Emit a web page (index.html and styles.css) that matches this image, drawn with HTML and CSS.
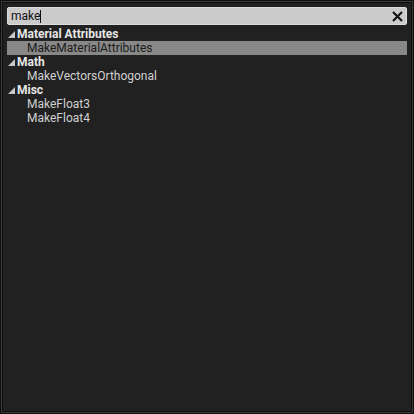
FILE: index.html
```html
<!DOCTYPE html>
<html>
<head>
<meta charset="utf-8">
<link rel="stylesheet" href="styles.css">
</head>
<body>
<div class="frame">
  <div class="inner">
    <div class="search">
      <span class="query">make</span><span class="caret"></span>
      <svg class="clear" width="11" height="11" viewBox="0 0 11 11"><path d="M1 1 L10 10 M10 1 L1 10" stroke="#111" stroke-width="2.1" fill="none"/></svg>
    </div>
    <div class="list">
      <div class="row cat"><span class="tri"></span>Material Attributes</div>
      <div class="row item sel">MakeMaterialAttributes</div>
      <div class="row cat"><span class="tri"></span>Math</div>
      <div class="row item">MakeVectorsOrthogonal</div>
      <div class="row cat"><span class="tri"></span>Misc</div>
      <div class="row item">MakeFloat3</div>
      <div class="row item">MakeFloat4</div>
    </div>
  </div>
</div>
</body>
</html>
```
FILE: styles.css
```css
html, body { margin: 0; padding: 0; background: #0e0e0e; }
body { width: 414px; height: 414px; font-family: Roboto, "Noto Sans", sans-serif; }
.frame {
  box-sizing: border-box;
  width: 414px; height: 414px;
  border: 1px solid #0e0e0e;
  background: #3a3a3a;
  padding: 1px;
}
.inner {
  box-sizing: border-box;
  height: 100%;
  border: 1px solid #0e0e0e;
  background: #212121;
  padding: 4px 4px;
}
.search {
  box-sizing: border-box;
  height: 18px;
  background: #cbcbcb;
  border: 1px solid #dcdcdc;
  border-radius: 2px;
  display: flex;
  align-items: center;
  padding-left: 3px;
  padding-right: 3px;
  color: #111;
  font-size: 12px;
}
.query { line-height: 16px; }
.caret { width: 1px; height: 13px; background: #111; }
.clear { margin-left: auto; }
.list { margin-top: 2px; }
.row {
  height: 14px;
  line-height: 14px;
  font-size: 12px;
  white-space: nowrap;
}
.cat { color: #e6e6e6; font-weight: bold; padding-left: 1px; display: flex; align-items: center; }
.tri {
  width: 0; height: 0;
  border-left: 7px solid transparent;
  border-bottom: 7px solid #c8c8c8;
  margin-right: 2px;
  margin-top: 1px;
}
.item { color: #d0d0d0; padding-left: 20px; }
.sel { background: #888888; color: #1a1a1a; }
```
